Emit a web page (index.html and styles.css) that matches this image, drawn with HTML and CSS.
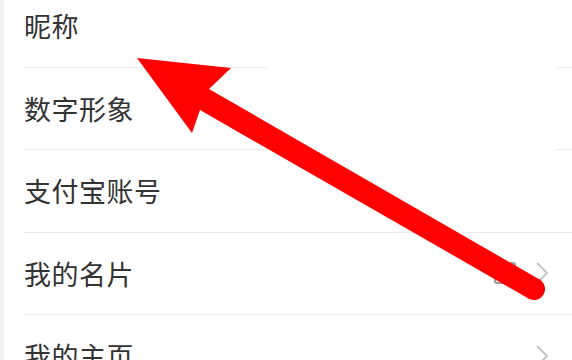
FILE: index.html
```html
<!DOCTYPE html>
<html lang="zh-CN">

<head>
    <meta charset="UTF-8">
    <meta name="viewport" content="width=device-width, initial-scale=1.0">
    <title>个人信息</title>
    <link rel="stylesheet" href="styles.css">
</head>

<body>
    <div class="trang">
        <div class="vien-trai"></div>
        <ul class="danh-sach">
            <li class="dong">
                <span class="ten">昵称</span>
                <svg class="mui-ten" viewBox="0 0 14 24"><polyline points="2,2 12,12 2,22" /></svg>
            </li>
            <li class="dong">
                <span class="ten">数字形象</span>
                <svg class="mui-ten" viewBox="0 0 14 24"><polyline points="2,2 12,12 2,22" /></svg>
            </li>
            <li class="dong">
                <span class="ten">支付宝账号</span>
                <svg class="mui-ten" viewBox="0 0 14 24"><polyline points="2,2 12,12 2,22" /></svg>
            </li>
            <li class="dong">
                <span class="ten">我的名片</span>
                <svg class="ma-qr" viewBox="0 0 22 22">
                    <rect x="1" y="1" width="20" height="20" rx="2" />
                    <rect x="5" y="5" width="4" height="4" />
                    <rect x="13" y="5" width="4" height="4" />
                    <rect x="5" y="13" width="4" height="4" />
                </svg>
                <svg class="mui-ten" viewBox="0 0 14 24"><polyline points="2,2 12,12 2,22" /></svg>
            </li>
            <li class="dong">
                <span class="ten">我的主页</span>
                <svg class="mui-ten" viewBox="0 0 14 24"><polyline points="2,2 12,12 2,22" /></svg>
            </li>
        </ul>

        <!-- mui ten do danh dau -->
        <svg class="lop-ve" viewBox="0 0 572 360">
            <rect x="268" y="0" width="288" height="202" fill="#fff" />
            <polygon fill="#fe0202"
                points="137,58 231,68 209,89 539.5,279.5 528.5,298.5 200,110 192,133" />
            <circle fill="#fe0202" cx="534" cy="289" r="11" />
        </svg>
    </div>
</body>

</html>
```

FILE: styles.css
```css
* {
    box-sizing: border-box;
}

body {
    margin: 0;
    background: #fff;
    font-family: "Noto Sans CJK SC", "Noto Sans", sans-serif;
}

.trang {
    position: relative;
    width: 572px;
    height: 360px;
    overflow: hidden;
    display: flex;
}

.vien-trai {
    width: 4px;
    flex-shrink: 0;
    background: #f1f1f1;
}

.danh-sach {
    flex: 1;
    margin: -15px 0 0 20px;
    padding: 0;
    list-style: none;
}

.dong {
    display: flex;
    align-items: center;
    height: 82.5px;
    padding-right: 23px;
    border-bottom: 1px solid #ebebeb;
}

.ten {
    flex: 1;
    font-size: 27px;
    color: #333;
    letter-spacing: 0.5px;
}

.mui-ten {
    width: 14px;
    height: 24px;
    fill: none;
    stroke: #c4c4c4;
    stroke-width: 2;
}

.ma-qr {
    width: 22px;
    height: 22px;
    margin-right: 19px;
    fill: none;
    stroke: #9a9a9a;
    stroke-width: 2;
}

.lop-ve {
    position: absolute;
    top: 0;
    left: 0;
    width: 572px;
    height: 360px;
    pointer-events: none;
}
```
